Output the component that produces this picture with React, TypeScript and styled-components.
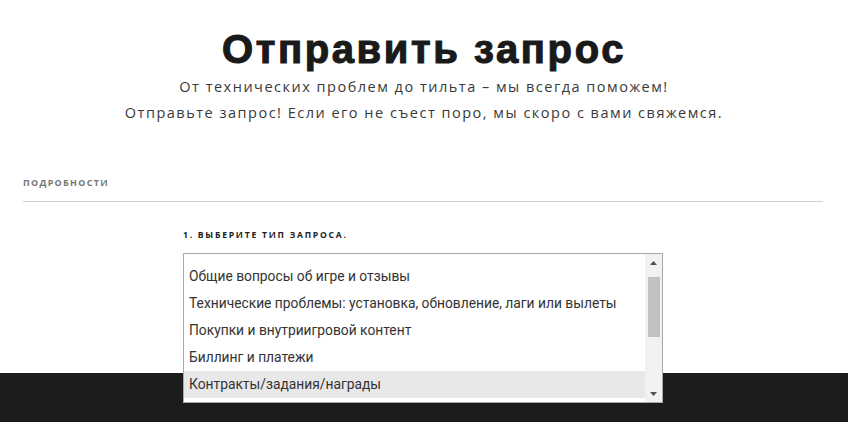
import React from 'react';
import styled, { createGlobalStyle } from 'styled-components';

const GlobalStyle = createGlobalStyle`
  html, body {
    margin: 0;
    padding: 0;
    background: #ffffff;
  }
  body {
    font-family: 'Open Sans', 'Liberation Sans', sans-serif;
    overflow: hidden;
  }
`;

const Page = styled.div`
  width: 848px;
  height: 422px;
  display: flex;
  flex-direction: column;
  overflow: hidden;
`;

const Header = styled.header`
  display: flex;
  flex-direction: column;
  align-items: center;
  padding-top: 24px;
`;

const Title = styled.h1`
  margin: 0;
  font-family: 'Liberation Sans', Arial, sans-serif;
  font-weight: 900;
  font-size: 40px;
  line-height: 50px;
  letter-spacing: 2.6px;
  color: #1a1a1a;
  -webkit-text-stroke: 1.1px #1a1a1a;
`;

const Subtitle = styled.p`
  margin: 0;
  text-align: center;
  font-size: 14.5px;
  line-height: 26px;
  letter-spacing: 1.5px;
  color: #3a3a3a;
`;

const Form = styled.section`
  height: 197px;
  padding: 50px 25px 0 23px;
`;

const SectionLabel = styled.div`
  font-family: 'Open Sans', 'Liberation Sans', sans-serif;
  font-size: 9px;
  font-weight: 700;
  letter-spacing: 1.3px;
  color: #777;
  padding-bottom: 12px;
  border-bottom: 1px solid #cfcfcf;
`;

const Field = styled.div`
  margin-left: 160px;
  padding-top: 27px;
  width: 480px;
`;

const FieldLabel = styled.div`
  font-family: 'Open Sans', 'Liberation Sans', sans-serif;
  font-size: 8.6px;
  font-weight: 700;
  letter-spacing: 1.75px;
  color: #222;
  margin-bottom: 12px;
`;

const ListBox = styled.div`
  position: relative;
  z-index: 1;
  height: 148px;
  border: 1px solid #a9a9a9;
  background: #fff;
  display: flex;
`;

const Options = styled.div`
  flex: 1;
  padding-top: 9px;
  overflow: hidden;
`;

const Option = styled.div<{ $selected?: boolean }>`
  height: 27px;
  line-height: 27px;
  padding-left: 5px;
  font-family: Roboto, 'Liberation Sans', sans-serif;
  font-size: 13.8px;
  color: #333;
  white-space: nowrap;
  background: ${(p) => (p.$selected ? '#e8e8e8' : 'transparent')};
`;

const Scrollbar = styled.div`
  width: 17px;
  background: #f1f1f1;
  display: flex;
  flex-direction: column;
  align-items: center;
`;

const Arrow = styled.div`
  height: 17px;
  display: flex;
  align-items: center;
  justify-content: center;
`;

const Track = styled.div`
  flex: 1;
  width: 100%;
  display: flex;
  justify-content: center;
`;

const Thumb = styled.div`
  width: 12px;
  height: 60px;
  margin-top: 6px;
  background: #c1c1c1;
`;

const Footer = styled.footer`
  flex: 1;
  background: #1c1c1c;
`;

const options = [
  'Общие вопросы об игре и отзывы',
  'Технические проблемы: установка, обновление, лаги или вылеты',
  'Покупки и внутриигровой контент',
  'Биллинг и платежи',
  'Контракты/задания/награды',
];

export default function App() {
  return (
    <>
      <GlobalStyle />
      <Page>
        <Header>
          <Title>Отправить запрос</Title>
          <Subtitle>
            От технических проблем до тильта – мы всегда поможем!
            <br />
            Отправьте запрос! Если его не съест поро, мы скоро с вами свяжемся.
          </Subtitle>
        </Header>
        <Form>
          <SectionLabel>ПОДРОБНОСТИ</SectionLabel>
          <Field>
            <FieldLabel>1. ВЫБЕРИТЕ ТИП ЗАПРОСА.</FieldLabel>
            <ListBox>
              <Options>
                {options.map((o, i) => (
                  <Option key={o} $selected={i === 4}>
                    {o}
                  </Option>
                ))}
              </Options>
              <Scrollbar>
                <Arrow>
                  <svg width="7" height="4" viewBox="0 0 7 4">
                    <path d="M0 4 L3.5 0 L7 4 Z" fill="#505050" />
                  </svg>
                </Arrow>
                <Track>
                  <Thumb />
                </Track>
                <Arrow>
                  <svg width="7" height="4" viewBox="0 0 7 4">
                    <path d="M0 0 L3.5 4 L7 0 Z" fill="#505050" />
                  </svg>
                </Arrow>
              </Scrollbar>
            </ListBox>
          </Field>
        </Form>
        <Footer />
      </Page>
    </>
  );
}
